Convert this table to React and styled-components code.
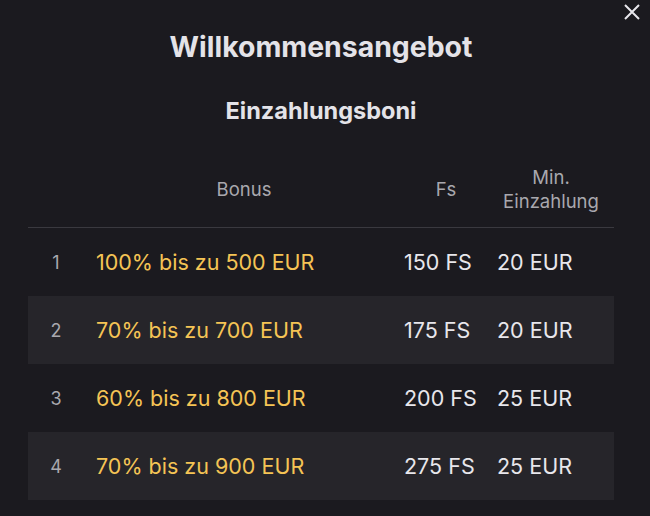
import React from 'react';
import styled, { createGlobalStyle } from 'styled-components';

const Global = createGlobalStyle`
	html, body {
		margin: 0;
		background: #1b1a1f;
	}
	body {
		font-family: Inter, "Noto Sans", sans-serif;
		color: #e8e7ec;
	}
`;

const Modal = styled.div`
	position: relative;
	width: 650px;
	height: 516px;
	overflow: hidden;
	background: #1b1a1f;
	padding: 30px 36px 0 28px;
	box-sizing: border-box;
`;

const Close = styled.button`
	position: absolute;
	top: 1px;
	right: 7px;
	width: 22px;
	height: 22px;
	padding: 0;
	border: 0;
	background: none;
	color: #e8e7ec;
	cursor: pointer;
	display: flex;
	align-items: center;
	justify-content: center;
`;

const Title = styled.h2`
	margin: 0;
	text-align: center;
	font-size: 28.4px;
	line-height: 34px;
	font-weight: 700;
	color: #e4e3e8;
`;

const Subtitle = styled.h3`
	margin: 32px 0 0;
	text-align: center;
	font-size: 23.5px;
	line-height: 30px;
	font-weight: 700;
	color: #e4e3e8;
`;

const Table = styled.div`
	margin-top: 39px;
	display: grid;
	grid-template-columns: 56px 320px 84px 1fr;
`;

const HeadRow = styled.div`
	display: contents;
`;

const HeadCell = styled.div`
	display: flex;
	align-items: center;
	justify-content: center;
	text-align: center;
	height: 48px;
	padding-bottom: 14px;
	border-bottom: 1px solid #3a393f;
	font-size: 18.5px;
	line-height: 24px;
	color: #a9a8ae;
`;

const Row = styled.div`
	display: contents;

	& > div {
		background: ${p => (p.$striped ? '#26252a' : 'transparent')};
	}
`;

const Cell = styled.div`
	display: flex;
	align-items: center;
	justify-content: ${p => (p.$center ? 'center' : 'flex-start')};
	height: 68px;
	padding-left: ${p => p.$pad || 0}px;
	font-size: ${p => (p.$small ? 18 : 21.5)}px;
	color: ${p => p.$color || '#e8e7ec'};
	white-space: nowrap;
`;

const rows = [
	{ n: 1, bonus: '100% bis zu 500 EUR', fs: '150 FS', min: '20 EUR' },
	{ n: 2, bonus: '70% bis zu 700 EUR', fs: '175 FS', min: '20 EUR' },
	{ n: 3, bonus: '60% bis zu 800 EUR', fs: '200 FS', min: '25 EUR' },
	{ n: 4, bonus: '70% bis zu 900 EUR', fs: '275 FS', min: '25 EUR' },
];

const App = () => (
	<>
		<Global />
		<Modal>
			<Close aria-label="close">
				<svg width="18" height="18" viewBox="0 0 18 18">
					<path d="M2 2L16 16M16 2L2 16" stroke="currentColor" strokeWidth="2" />
				</svg>
			</Close>

			<Title>Willkommensangebot</Title>
			<Subtitle>Einzahlungsboni</Subtitle>

			<Table>
				<HeadRow>
					<HeadCell />
					<HeadCell>Bonus</HeadCell>
					<HeadCell>Fs</HeadCell>
					<HeadCell>Min.<br />Einzahlung</HeadCell>
				</HeadRow>

				{rows.map((r, i) => (
					<Row key={r.n} $striped={i % 2 === 1}>
						<Cell $center $small $color="#a9a8ae">{r.n}</Cell>
						<Cell $pad={12} $color="#f5c455">{r.bonus}</Cell>
						<Cell>{r.fs}</Cell>
						<Cell $pad={9}>{r.min}</Cell>
					</Row>
				))}
			</Table>
		</Modal>
	</>
);

export default App;
